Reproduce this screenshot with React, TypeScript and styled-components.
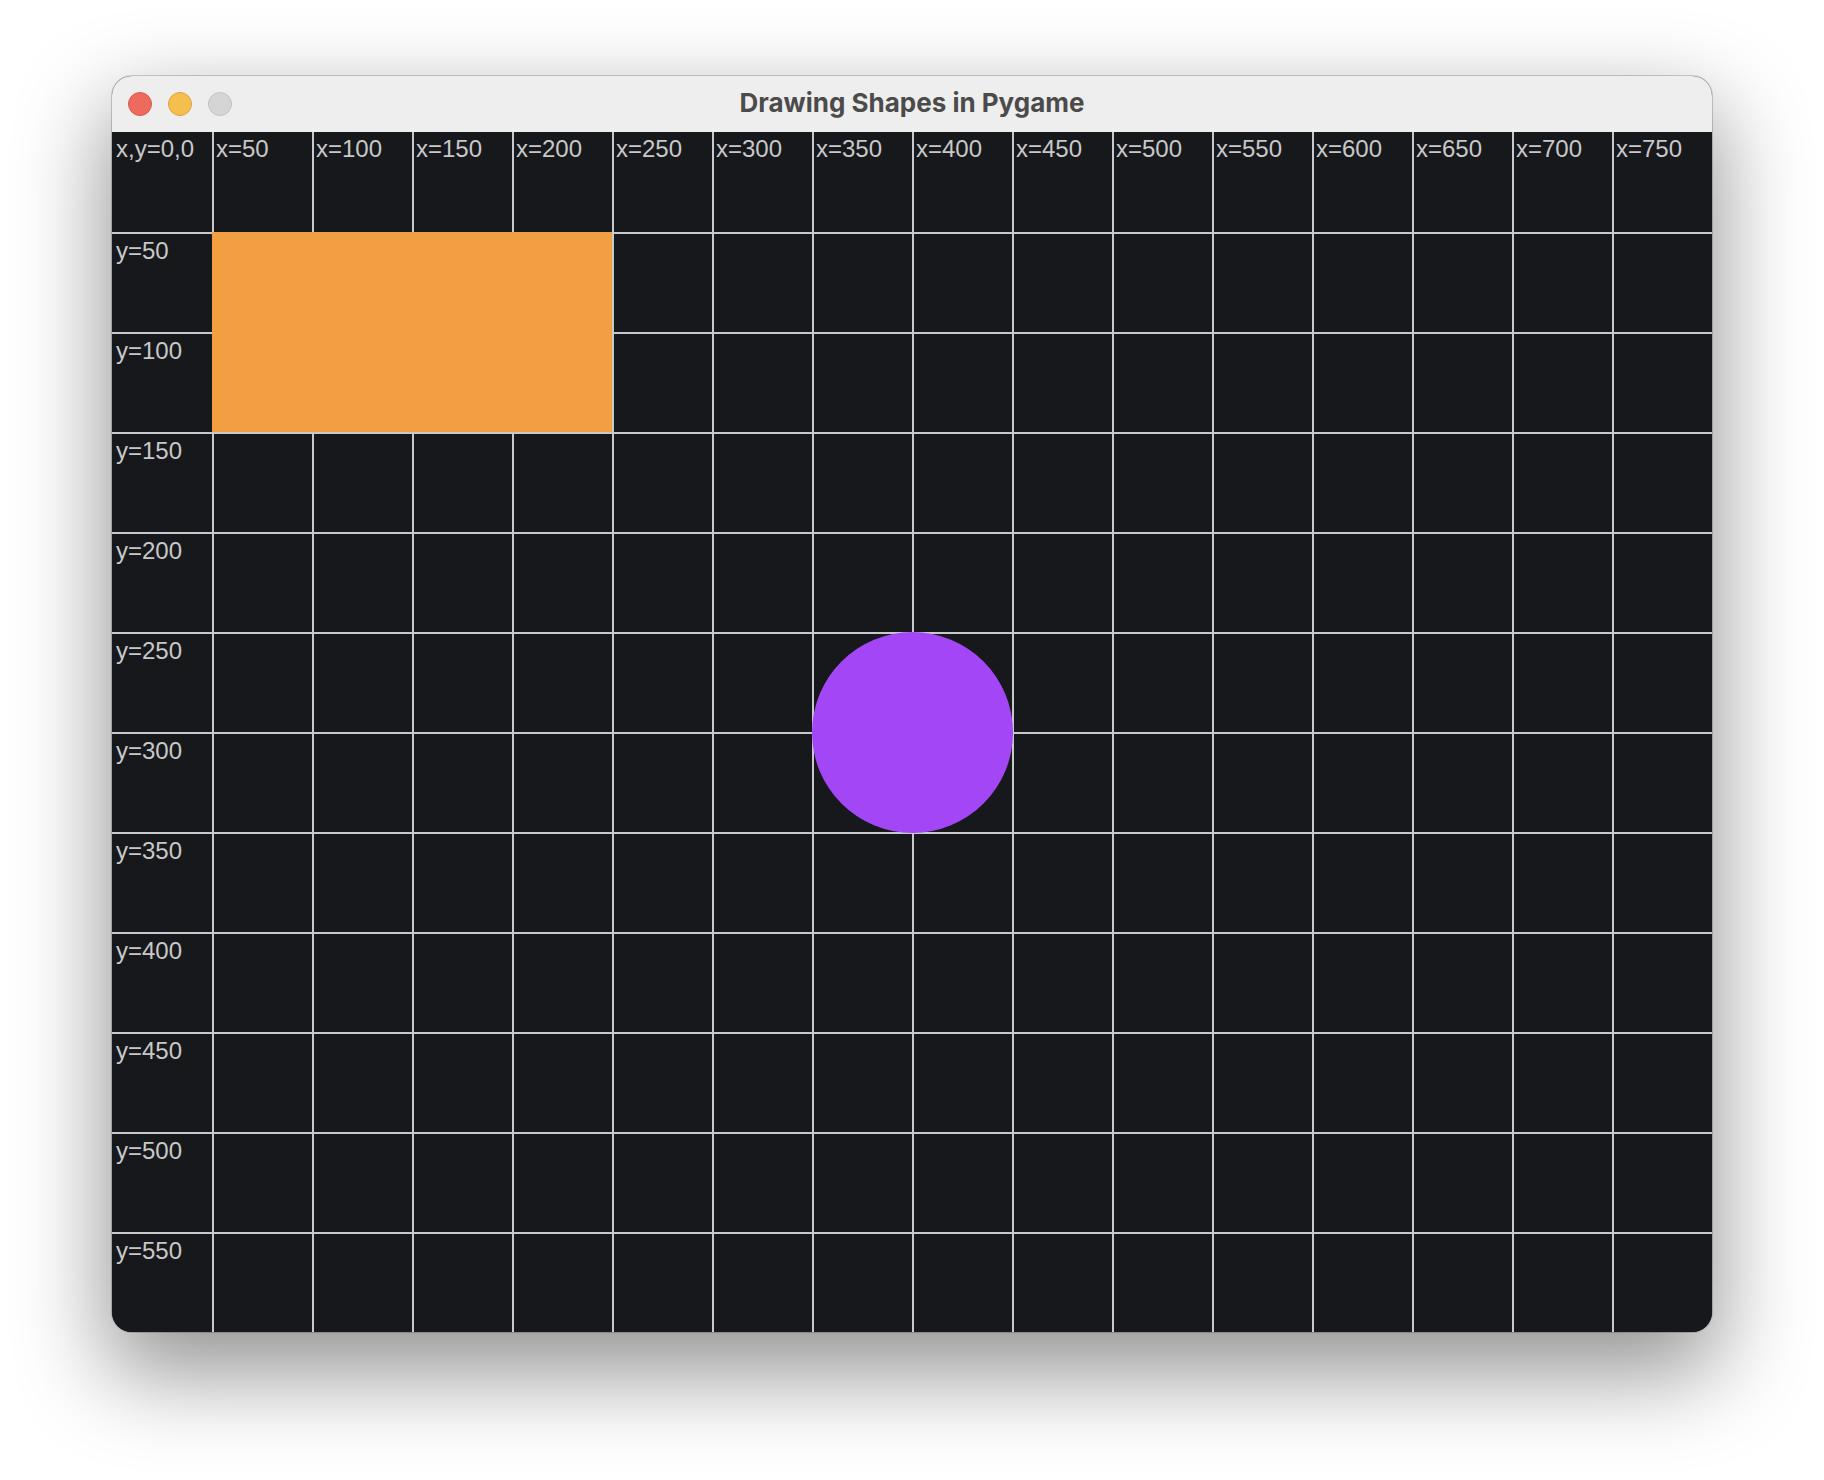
import React from "react";
import styled, { createGlobalStyle } from "styled-components";

const Global = createGlobalStyle`
  html, body { margin: 0; padding: 0; background: #ffffff; }
  body { width: 1824px; height: 1480px; overflow: hidden; }
`;

const Page = styled.div`
  width: 1824px;
  height: 1480px;
  box-sizing: border-box;
  padding: 76px 112px 0 112px;
  background: #ffffff;
`;

const Window = styled.div`
  width: 1600px;
  border-radius: 20px;
  overflow: hidden;
  background: #17181c;
  box-shadow: 0 0 0 1px rgba(0, 0, 0, 0.18), 0 36px 90px 6px rgba(0, 0, 0, 0.42);
  display: flex;
  flex-direction: column;
`;

const TitleBar = styled.div`
  height: 56px;
  background: #eeeeee;
  display: flex;
  align-items: center;
  position: relative;
  padding-left: 16px;
  gap: 16px;
  box-sizing: border-box;
`;

const Light = styled.span<{ $fill: string; $edge: string }>`
  width: 24px;
  height: 24px;
  border-radius: 50%;
  box-sizing: border-box;
  background: ${(p) => p.$fill};
  border: 1px solid ${(p) => p.$edge};
`;

const Title = styled.div`
  position: absolute;
  left: 0;
  right: 0;
  top: 0;
  bottom: 4px;
  display: flex;
  align-items: center;
  justify-content: center;
  font-family: Inter, "Liberation Sans", sans-serif;
  font-weight: 700;
  font-size: 26px;
  color: #4b4b4b;
  pointer-events: none;
`;

const Canvas = styled.div`
  position: relative;
  width: 1600px;
  height: 1200px;
  display: grid;
  grid-template-columns: repeat(16, 100px);
  grid-template-rows: repeat(12, 100px);
  background: #17181c;
`;

const Cell = styled.div<{ $col: number; $row: number }>`
  box-sizing: border-box;
  border-left: ${(p) => (p.$col > 0 ? "2px solid #c9c9cc" : "none")};
  border-top: ${(p) => (p.$row > 0 ? "2px solid #c9c9cc" : "none")};
  padding: 3px 0 0 ${(p) => (p.$col > 0 ? 2 : 4)}px;
  font-family: "Liberation Sans", Arial, sans-serif;
  font-size: 24px;
  color: #c8c8c8;
  white-space: nowrap;
  overflow: hidden;
`;

const RectShape = styled.div`
  position: absolute;
  left: 100px;
  top: 100px;
  width: 400px;
  height: 200px;
  background: #f29f43;
`;

const CircleShape = styled.div`
  position: absolute;
  left: 700px;
  top: 500px;
  width: 201px;
  height: 201px;
  border-radius: 50%;
  background: #a346f6;
`;

function label(row: number, col: number): string {
  if (row === 0 && col === 0) return "x,y=0,0";
  if (row === 0) return `x=${col * 50}`;
  if (col === 0) return `y=${row * 50}`;
  return "";
}

export default function App() {
  const cells: React.ReactNode[] = [];
  for (let r = 0; r < 12; r++) {
    for (let c = 0; c < 16; c++) {
      cells.push(
        <Cell key={`${r}-${c}`} $row={r} $col={c}>
          {label(r, c)}
        </Cell>
      );
    }
  }
  return (
    <>
      <Global />
      <Page>
        <Window>
          <TitleBar>
            <Light $fill="#ee6a5f" $edge="#d35a50" />
            <Light $fill="#f5bf4f" $edge="#d8a43e" />
            <Light $fill="#d5d5d5" $edge="#c2c2c2" />
            <Title>Drawing Shapes in Pygame</Title>
          </TitleBar>
          <Canvas>
            {cells}
            <RectShape />
            <CircleShape />
          </Canvas>
        </Window>
      </Page>
    </>
  );
}
